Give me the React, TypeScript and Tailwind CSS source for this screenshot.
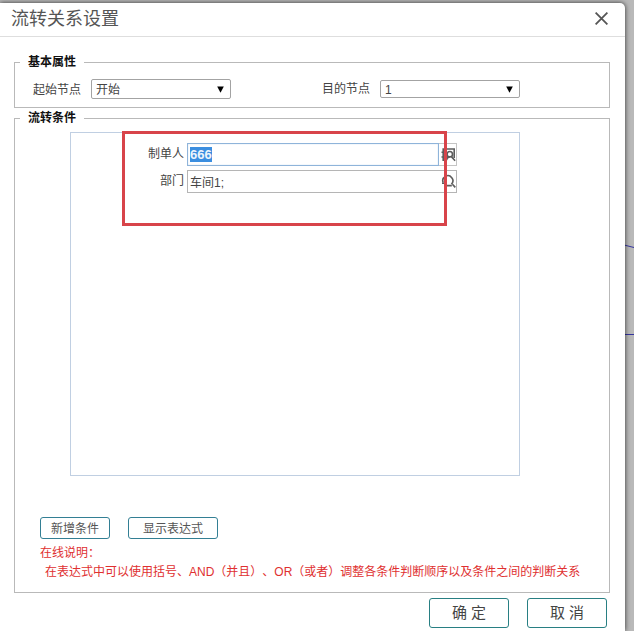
import type { ReactNode } from "react";

interface PanelProps {
  title: string;
  className: string;
  children: ReactNode;
}

function Panel({ title, className, children }: PanelProps) {
  return (
    <fieldset className={`border border-[#b9b9b9] ${className}`}>
      <legend className="ml-[5px] h-[17px] px-2 text-[12px] leading-[17px] font-bold text-[#111]">
        {title}
      </legend>
      {children}
    </fieldset>
  );
}

interface SelectBoxProps {
  value: string;
  className: string;
}

function SelectBox({ value, className }: SelectBoxProps) {
  return (
    <button
      type="button"
      className={`flex w-[140px] items-center justify-between rounded-[2px] border border-[#a3a3a3] bg-white pr-[6px] pl-1 text-[12px] text-[#444] ${className}`}
    >
      <span className="pt-px">{value}</span>
      <svg width="7" height="7" viewBox="0 0 7 7" fill="#000">
        <path d="M0.2 0.5h6.6L3.5 6.8z" />
      </svg>
    </button>
  );
}

function OrgSearchIcon() {
  return (
    <svg className="mt-px" width="15" height="16" viewBox="0 0 15 16" fill="none" stroke="#5c5c5c" strokeWidth="1.6">
      <path d="M6 13.2H2.2V2h11v9" />
      <path d="M0.5 5.2h3M0.5 10h3" />
      <circle cx="8.8" cy="7.2" r="2.7" />
      <path d="M5.5 13.2c.2-2 1.4-3.2 3.3-3.3M10.2 9.4l3.9 4.3" />
    </svg>
  );
}

function SearchIcon() {
  return (
    <svg className="-mt-px" width="15" height="16" viewBox="0 0 15 16" fill="none" stroke="#5c5c5c" strokeWidth="1.6">
      <path d="M2.2 9.6A5 5 0 1 1 10.4 11.2" />
      <path d="M1 10.3h3.6M6 12.6h4.8M11.4 11.2l2.9 3.2" />
    </svg>
  );
}

export default function App() {
  return (
    <div className="relative h-[631px] w-[634px] overflow-hidden bg-[#b9b9b9] pt-[3px] font-['Liberation_Sans','Noto_Sans_CJK_SC',sans-serif] text-[12px] text-[#444] [text-spacing-trim:space-all]">
      {/* canvas links behind the dialog */}
      <svg className="absolute top-[240px] left-[624px]" width="10" height="100" fill="none" stroke="#3535a0">
        <path d="M0 5l10 2.5" />
        <path d="M0 94.5h10" />
      </svg>

      <div
        role="dialog"
        className="relative h-[628px] w-[625px] rounded-tr-[5px] bg-white shadow-[0_0_5px_rgba(0,0,0,0.75)]"
      >
        <header className="flex h-[34px] items-center justify-between border-b border-[#dedede] pr-[17px] pl-[11px]">
          <h1 className="text-[18px] leading-[32px] text-[#555] -mt-px">流转关系设置</h1>
          <button type="button" aria-label="关闭" className="-mt-[3px]">
            <svg width="13" height="13" viewBox="0 0 13 13" fill="none" stroke="#555" strokeWidth="1.8">
              <path d="M0.6 0.6l11.8 11.8M12.4 0.6L0.6 12.4" />
            </svg>
          </button>
        </header>

        <main className="pt-[17px] pl-[14px]">
          <Panel title="基本属性" className="h-[54px] w-[596px]">
            <div className="flex h-[36px] items-center pl-[18px]">
              <span className="w-[58px] pt-px">起始节点</span>
              <SelectBox value="开始" className="h-5" />
              <span className="ml-[91px] w-[58px]">目的节点</span>
              <SelectBox value="1" className="h-[18px]" />
            </div>
          </Panel>

          <Panel title="流转条件" className="mt-[2px] h-[483px] w-[596px]">
            <div className="relative mt-[5px] ml-[55px] h-[344px] w-[450px] border border-[#c0cfe2] pt-[10px]">
              <div className="flex h-[23px]">
                <span className="w-[113px] text-right leading-[23px]">制单人</span>
                <div className="ml-[3px] flex h-[23px] w-[252px] items-center border border-[#8fb4da] pl-[2px] shadow-[inset_0_0_1px_#8fb4da]">
                  <span className="bg-[#3b8ee0] text-[13px] leading-[15px] font-bold text-[#eef5fc]">666</span>
                </div>
                <div className="flex w-[18px] items-center justify-end border border-l-0 border-[#c4c4c4]">
                  <OrgSearchIcon />
                </div>
              </div>
              <div className="mt-1 flex h-[23px]">
                <span className="w-[113px] text-right leading-[23px]">部门</span>
                <div className="ml-[3px] flex h-[23px] w-[270px] items-center justify-between border border-[#b5b5b5] pl-[2px]">
                  <span className="pt-[2px]">车间1;</span>
                  <SearchIcon />
                </div>
              </div>
              {/* highlighted area */}
              <div className="absolute top-[-2px] left-[51px] h-[95px] w-[325px] border-[3px] border-[#d8444a]" />
            </div>

            <div className="mt-[41px] ml-[25px] flex gap-[18px]">
              <button type="button" className="h-[22px] w-[70px] rounded-[3px] border border-[#337f94] pt-px leading-[20px] text-[#555]">
                新增条件
              </button>
              <button type="button" className="h-[22px] w-[90px] rounded-[3px] border border-[#337f94] pt-px leading-[20px] text-[#555]">
                显示表达式
              </button>
            </div>

            <div className="mt-[5px] ml-[25px] leading-[19px] whitespace-nowrap text-[#e03030]">
              <p>在线说明：</p>
              <p className="pl-[5px]">
                在表达式中可以使用括号、AND（并且）、OR（或者）调整各条件判断顺序以及条件之间的判断关系
              </p>
            </div>
          </Panel>
        </main>

        <footer className="flex justify-end gap-[18px] pt-[5px] pr-[18px]">
          <button type="button" className="h-[30px] w-20 rounded-[3px] border border-[#287f83] text-[15px] leading-[28px]">
            确 定
          </button>
          <button type="button" className="h-[30px] w-20 rounded-[3px] border border-[#287f83] text-[15px] leading-[28px]">
            取 消
          </button>
        </footer>
      </div>
    </div>
  );
}
